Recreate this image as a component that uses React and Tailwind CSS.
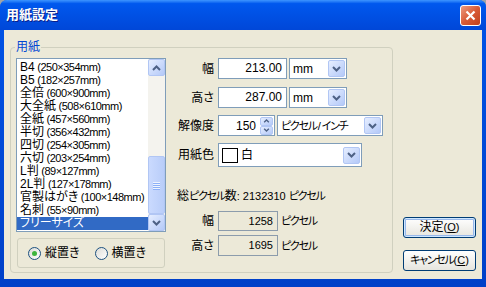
import clsx from "clsx";

const papers = [
  ["B4", " (250×354mm)"],
  ["B5", " (182×257mm)"],
  ["全倍", " (600×900mm)"],
  ["大全紙", " (508×610mm)"],
  ["全紙", " (457×560mm)"],
  ["半切", " (356×432mm)"],
  ["四切", " (254×305mm)"],
  ["六切", " (203×254mm)"],
  ["L判", " (89×127mm)"],
  ["2L判", " (127×178mm)"],
  ["官製はがき", " (100×148mm)"],
  ["名刺", " (55×90mm)"],
  ["フリーサイズ", ""],
];

const Chevron = ({ up, small }) => (
  <svg width={small ? 7 : 9} height={small ? 4 : 6} viewBox="0 0 9 6">
    <path
      d={up ? "M1 5 L4.5 1.5 L8 5" : "M1 1 L4.5 4.5 L8 1"}
      fill="none"
      stroke="#4D6185"
      strokeWidth="2"
    />
  </svg>
);

const ArrowBox = ({ className, up, small }) => (
  <div
    className={clsx(
      "flex items-center justify-center rounded-[2px] border border-[#B1C6F4] bg-linear-to-br from-[#E6EEFF] to-[#B4C9F8]",
      className
    )}
  >
    <Chevron up={up} small={small} />
  </div>
);

const Combo = ({ className, children }) => (
  <div className={clsx("flex items-center border border-[#7F9DB9] bg-white pl-[3px] pr-[1px]", className)}>
    <div className="flex flex-1 items-center gap-[3px] whitespace-nowrap">{children}</div>
    <ArrowBox className="h-[17px] w-[17px]" />
  </div>
);

const Edit = ({ className, children }) => (
  <div className={clsx("h-[21px] border border-[#7F9DB9] bg-white pr-[4px] text-right leading-[19px]", className)}>
    {children}
  </div>
);

const Radio = ({ checked, label }) => (
  <div className="flex items-center gap-[4px]">
    <div className="flex h-[13px] w-[13px] items-center justify-center rounded-full border border-[#1C5180] bg-linear-to-br from-[#DCDCD7] to-white">
      {checked && <div className="h-[5px] w-[5px] rounded-full bg-[#3DB53D]" />}
    </div>
    <span>{label}</span>
  </div>
);

const Row = ({ label, children, className }) => (
  <div className={clsx("flex items-center", className)}>
    <div className="w-[37px] text-right">{label}</div>
    <div className="ml-[4px] flex items-center gap-[2px]">{children}</div>
  </div>
);

// narrow kana like the old proportional UI font
const Kana = ({ children }) => <span className="text-[11px] tracking-[-1.3px]">{children}</span>;

const Scrollbar = () => (
  <div className="flex w-[17px] flex-col bg-[#F4F3EE]">
    <ArrowBox up className="h-[17px]" />
    <div className="flex flex-1 flex-col justify-end">
      <div className="flex h-[58px] flex-col items-center justify-center gap-[1px] rounded-[2px] border border-[#B1C6F4] bg-linear-to-r from-[#CADAFE] to-[#B9CDF9]">
        {[0, 1, 2, 3].map((i) => (
          <div key={i} className="h-[1px] w-[7px] bg-[#EEF4FE] shadow-[0_1px_0_#8CB0F8]" />
        ))}
      </div>
    </div>
    <ArrowBox className="h-[17px]" />
  </div>
);

const XpButton = ({ children, def }) => (
  <button
    className={clsx(
      "h-[21px] w-[73px] whitespace-nowrap rounded-[3px] border border-[#003C74] bg-linear-to-b from-white to-[#E6E5DE] leading-[19px] text-black",
      def && "shadow-[inset_0_0_0_1px_#CEE7FF,inset_0_0_0_2px_#98B8EA]"
    )}
  >
    {children}
  </button>
);

export default function App() {
  return (
    <div className="h-[287px] w-[486px] bg-[#A0A4A8] font-['Liberation_Sans','Noto_Sans_CJK_JP',sans-serif] text-[12px] text-black [font-feature-settings:'palt']">
      <div className="flex h-full flex-col rounded-t-[7px] bg-linear-to-b from-[#0054E8] to-[#0040C8]">
        {/* title bar */}
        <div className="flex h-[30px] items-center rounded-t-[7px] bg-linear-to-b from-[#3D95FF] via-[#0058EE] via-[12%] to-[#0047D8] pl-[6px] pr-[5px]">
          <span className="flex-1 text-[13px] font-bold text-white [text-shadow:1px_1px_0_#0A1E8A]">用紙設定</span>
          <div className="flex h-[21px] w-[21px] items-center justify-center rounded-[3px] border border-white bg-linear-to-br from-[#EC9B80] via-[#D85A36] to-[#C1401B]">
            <svg width="11" height="11" viewBox="0 0 11 11">
              <path d="M1.5 1.5 L9.5 9.5 M9.5 1.5 L1.5 9.5" stroke="white" strokeWidth="2.2" />
            </svg>
          </div>
        </div>

        {/* client area */}
        <div className="mx-[4px] mb-[8px] flex flex-1 items-start bg-[#ECE9D8]">
          <div className="relative ml-[6px] mt-[17px] flex h-[226px] w-[383px] rounded-[4px] border border-[#D0D0BF] pl-[5px] pt-[10px]">
            <span className="absolute -top-[7px] left-[4px] bg-[#ECE9D8] px-[1px] leading-[12px] text-[#0046D5]">用紙</span>

            <div className="flex w-[150px] flex-col">
              <div className="flex h-[174px] border border-[#7F9DB9] bg-white">
                <div className="flex flex-1 flex-col overflow-hidden pt-[2px]">
                  {papers.map(([name, size], i) => (
                    <div
                      key={name}
                      className={clsx(
                        "h-[13px] whitespace-nowrap pl-[3px] leading-[13px]",
                        i === papers.length - 1 && "bg-[#316AC5] text-white"
                      )}
                    >
                      <span className="text-[12px]">{name}</span>
                      <span className="text-[11px] tracking-[-0.5px]">{size}</span>
                    </div>
                  ))}
                </div>
                <Scrollbar />
              </div>
              <div className="ml-[1px] mt-[6px] flex h-[30px] w-[148px] items-center gap-[15px] rounded-[3px] border border-[#D0D0BF] pl-[10px]">
                <Radio checked label="縦置き" />
                <Radio label="横置き" />
              </div>
            </div>

            <div className="ml-[11px] flex flex-col">
              <Row label="幅" className="h-[21px]">
                <Edit className="w-[69px]">213.00</Edit>
                <Combo className="h-[21px] w-[58px]">mm</Combo>
              </Row>
              <Row label="高さ" className="mt-[8px] h-[21px]">
                <Edit className="w-[69px]">287.00</Edit>
                <Combo className="h-[21px] w-[58px]">mm</Combo>
              </Row>
              <Row label="解像度" className="mt-[7px] h-[21px]">
                <div className="flex h-[21px] w-[57px] items-center border border-[#7F9DB9] bg-white pr-[1px]">
                  <span className="flex-1 pr-[4px] text-right">150</span>
                  <div className="flex flex-col">
                    <ArrowBox up small className="h-[9px] w-[13px]" />
                    <ArrowBox small className="h-[9px] w-[13px]" />
                  </div>
                </div>
                <Combo className="h-[21px] w-[106px]">
                  <span>
                    <Kana>ピクセル</Kana>
                    <span className="px-[1px] text-[11px]">/</span>
                    <Kana>インチ</Kana>
                  </span>
                </Combo>
              </Row>
              <Row label="用紙色" className="mt-[7px] h-[24px]">
                <Combo className="h-[24px] w-[144px]">
                  <div className="h-[15px] w-[16px] border border-black bg-white" />
                  <span>白</span>
                </Combo>
              </Row>

              <div className="mt-[22px] whitespace-nowrap leading-[14px]">
                総<Kana>ピクセル</Kana>数<span className="text-[11px]">: 2132310 </span>
                <Kana>ピクセル</Kana>
              </div>

              <Row label="幅" className="mt-[8px] h-[20px]">
                <div className="h-[20px] w-[60px] border border-[#8C9CAC] bg-[#ECE9D8] pr-[4px] text-right text-[11px] leading-[18px]">1258</div>
                <span className="ml-[1px]">
                  <Kana>ピクセル</Kana>
                </span>
              </Row>
              <Row label="高さ" className="mt-[4px] h-[21px]">
                <div className="h-[21px] w-[60px] border border-[#8C9CAC] bg-[#ECE9D8] pr-[4px] text-right text-[11px] leading-[19px]">1695</div>
                <span className="ml-[1px]">
                  <Kana>ピクセル</Kana>
                </span>
              </Row>
            </div>
          </div>

          <div className="ml-[10px] mt-[187px] flex flex-col gap-[12px]">
            <XpButton def>
              決定<span className="text-[11px]">(<u>O</u>)</span>
            </XpButton>
            <XpButton>
              <Kana>キャンセル</Kana>
              <span className="text-[11px]">(<u>C</u>)</span>
            </XpButton>
          </div>
        </div>
      </div>
    </div>
  );
}
